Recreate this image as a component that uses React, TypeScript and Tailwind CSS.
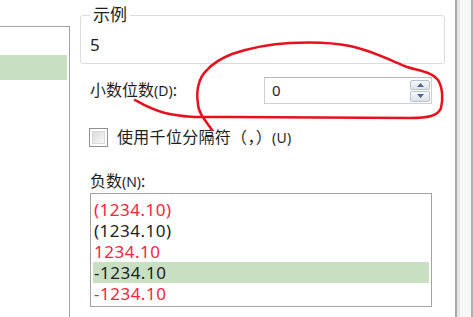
import React from "react";

const font = { fontFamily: '"Noto Sans", "Noto Sans CJK SC", sans-serif' };

const negatives = [
  { text: "(1234.10)", red: true },
  { text: "(1234.10)", red: false },
  { text: "1234.10", red: true },
  { text: "-1234.10", red: false, selected: true },
  { text: "-1234.10", red: true },
];

function Spinner() {
  return (
    <div className="flex h-[22px] w-[20px] flex-col gap-[1px]">
      <div className="flex flex-1 items-center justify-center rounded-[2px] border border-[#b9c2d0] bg-gradient-to-b from-[#f6f8fb] to-[#dde3ec]">
        <svg width="7" height="4" viewBox="0 0 7 4">
          <path d="M0 4 L3.5 0 L7 4 Z" fill="#4f6292" />
        </svg>
      </div>
      <div className="flex flex-1 items-center justify-center rounded-[2px] border border-[#b9c2d0] bg-gradient-to-b from-[#f6f8fb] to-[#dde3ec]">
        <svg width="7" height="4" viewBox="0 0 7 4">
          <path d="M0 0 L3.5 4 L7 0 Z" fill="#4f6292" />
        </svg>
      </div>
    </div>
  );
}

export default function App() {
  return (
    <div className="relative flex h-[317px] w-[473px] overflow-hidden bg-white text-[#1e1e1e]" style={font}>
      {/* Left list panel */}
      <div className="mt-[26px] w-[70px] shrink-0 border-t border-r border-[#a3a3a3]">
        <div className="mt-[28px] mr-[2px] h-[25px] bg-[#c8dfc1]" />
      </div>

      {/* Main settings */}
      <div className="flex w-[385px] shrink-0 flex-col pt-[3px]">
        <fieldset className="ml-[10px] w-[365px] rounded-[3px] border border-[#dcdcdc] pl-[9px] pb-[6px]">
          <legend className="px-[3px] text-[17px] leading-[24px]">示例</legend>
          <div className="pt-[6px] text-[17px] leading-[24px]">5</div>
        </fieldset>

        <div className="mt-[13px] flex items-center pl-[20px]">
          <span className="w-[174px] text-[16px] leading-[20px]">
            小数位数<span className="text-[14px]">(D)</span>:
          </span>
          <div className="flex h-[27px] w-[168px] items-center justify-between border border-[#cfcfcf] border-t-[#b8b8b8] pr-[1px] pl-[7px]">
            <span className="text-[15px]">0</span>
            <Spinner />
          </div>
        </div>

        <div className="mt-[23px] flex items-center gap-[9px] pl-[19px]">
          <div className="flex h-[19px] w-[19px] items-center justify-center border border-[#8f8f8f] bg-white">
            <div className="h-[13px] w-[13px] border border-[#dadada] bg-gradient-to-br from-[#dcdcdc] to-[#f8f8f8]" />
          </div>
          <span className="text-[16px] leading-[20px] tracking-[0.3px]">
            使用千位分隔符（，）<span className="text-[14px]">(U)</span>
          </span>
        </div>

        <div className="mt-[23px] pl-[20px] text-[16px] leading-[20px]">
          负数<span className="text-[14px]">(N)</span>:
        </div>

        <div className="mt-[1px] ml-[20px] h-[114px] w-[342px] border border-[#a3a3a3] px-[2px] pt-[5px]">
          {negatives.map((n, i) => (
            <div
              key={i}
              className={`h-[21px] pl-[1px] text-[17px] leading-[21px] tracking-[0.5px] ${n.selected ? "bg-[#c8dfc1]" : ""} ${n.red ? "text-[#f2253d]" : "text-[#1e1e1e]"}`}
            >
              {n.text}
            </div>
          ))}
        </div>
      </div>

      {/* Right edge strip */}
      <div className="flex flex-1">
        <div className="w-[2px] bg-[#a8a8a8]" />
        <div className="w-[3px] bg-[#e4e4e4]" />
        <div className="flex-1 bg-[#f7f7f7]" />
        <div className="w-[2px] bg-[#b0b0b0]" />
      </div>

      {/* Hand-drawn red annotation */}
      <svg className="pointer-events-none absolute inset-0" width="473" height="317" viewBox="0 0 473 317">
        <path
          d="M212 130 C205 120 198 112 198 104 C196 92 198 78 207 70 C214 62 222 58 232 54 C250 48 270 44 290 43 C310 42 330 42 350 46 C370 50 390 60 407 67 C420 71 432 72 438 80 C443 88 443 100 441 108 C438 116 428 118 410 118 C360 118 280 117 230 117 C205 117 185 118 165 113 C150 109 142 104 135 100"
          fill="none"
          stroke="#e8101c"
          strokeWidth="2.5"
          strokeLinecap="round"
          strokeLinejoin="round"
        />
      </svg>
    </div>
  );
}
